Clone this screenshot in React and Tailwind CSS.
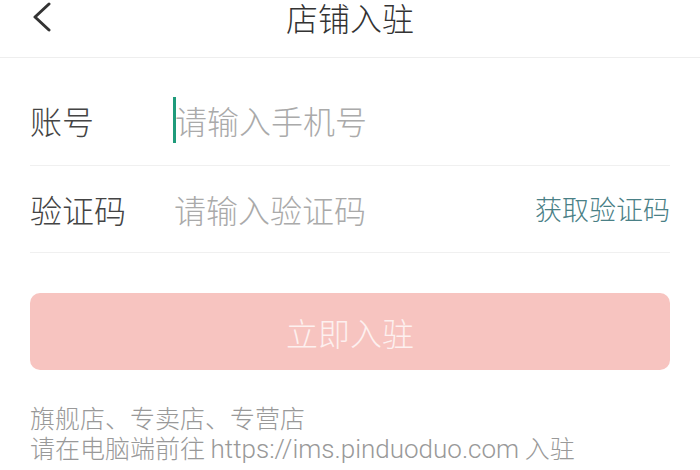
import React from 'react';

const font = { fontFamily: '"Noto Sans CJK SC", "Noto Sans", sans-serif' };

const App = () => {
  return (
    <div className="w-[700px] h-[470px] bg-white overflow-hidden font-light" style={font}>
      {/* Header */}
      <div className="relative h-[58px] border-b border-[#eeeeee] flex items-start justify-center">
        <svg className="absolute left-[30px] top-[2px]" width="24" height="30" viewBox="0 0 24 30" fill="none">
          <path d="M19 2 L5 15 L19 28" stroke="#333" strokeWidth="3" strokeLinecap="round" strokeLinejoin="round" />
        </svg>
        <h1 className="text-[32px] leading-[34px] text-[#333]">店铺入驻</h1>
      </div>

      {/* Form */}
      <div className="mx-[30px]">
        <div className="h-[108px] flex items-end pb-[20px] border-b border-[#f0f0f0]">
          <div className="flex items-center h-[50px]">
            <span className="w-[143px] text-[32px] text-[#444]">账号</span>
            <span className="w-[3px] h-[46px] bg-[#1f9b7b] mr-[-1px]" />
            <span className="text-[32px] text-[#aaaaaa]">请输入手机号</span>
          </div>
        </div>
        <div className="h-[87px] flex items-center justify-between border-b border-[#f0f0f0]">
          <div className="flex items-center">
            <span className="w-[144px] text-[32px] text-[#444]">验证码</span>
            <span className="text-[32px] text-[#aaaaaa]">请输入验证码</span>
          </div>
          <span className="text-[27px] text-[#4a8086]">获取验证码</span>
        </div>

        <button className="mt-[40px] w-full h-[77px] rounded-[10px] bg-[#f7c4c0] text-[32px] text-[#fdf0ef] flex items-center justify-center">
          立即入驻
        </button>

        <div className="mt-[32px] text-[25px] leading-[30px] text-[#999999]">
          <p>旗舰店、专卖店、专营店</p>
          <p>
            请在电脑端前往{' '}
            <span className="text-[26px]" style={{ fontFamily: 'Roboto, sans-serif' }}>https://ims.pinduoduo.com</span> 入驻
          </p>
        </div>
      </div>
    </div>
  );
};

export default App;
